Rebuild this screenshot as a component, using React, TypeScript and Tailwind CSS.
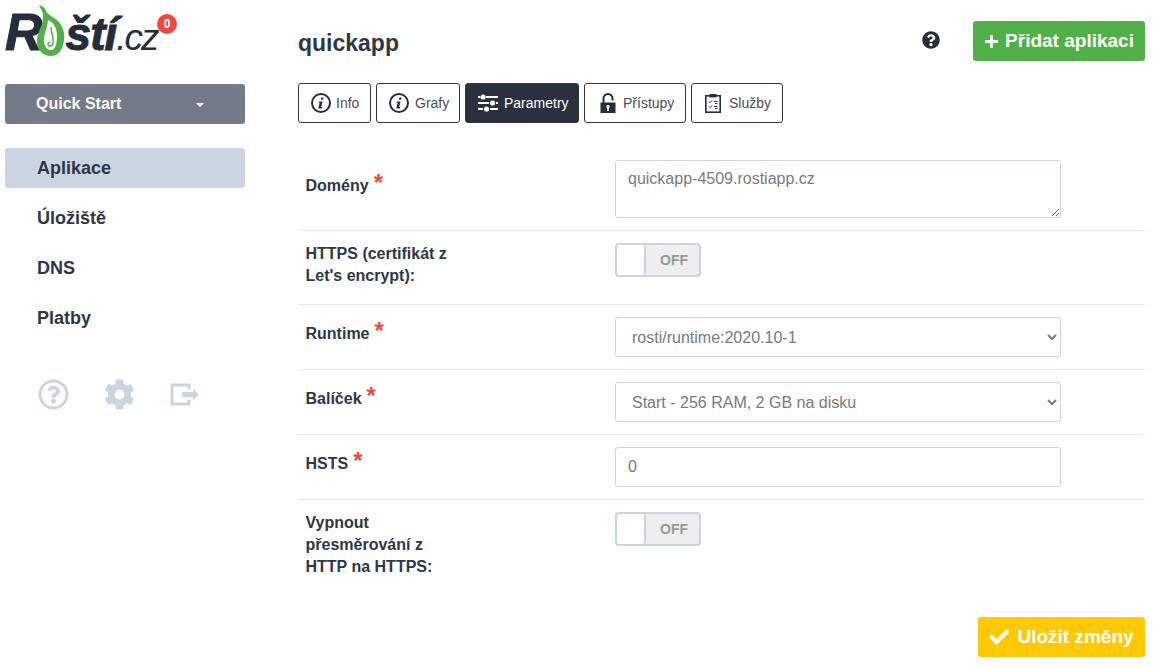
import { FaCheck, FaCog, FaPlus, FaQuestionCircle, FaRegQuestionCircle } from "react-icons/fa";

const font = "font-['Liberation_Sans',Arial,sans-serif]";

function InfoIcon() {
  return (
    <svg width="20" height="20" viewBox="0 0 20 20" fill="none">
      <circle cx="10" cy="10" r="9" stroke="currentColor" strokeWidth="2" />
      <path d="M10.4 4.6h2.2l-.5 2.2H9.9zM8 8.4h3.6l-1.5 5.6h1.2l-.4 1.4H7.2l1.5-5.6H7.6z" fill="currentColor" />
    </svg>
  );
}

function SlidersIcon() {
  return (
    <svg width="22" height="18" viewBox="0 0 22 18" fill="none">
      <path d="M1 3h2M9 3h12M1 9h11M19 9h2M1 15h5M13 15h8" stroke="currentColor" strokeWidth="2" />
      <circle cx="6" cy="3" r="2.6" fill="currentColor" />
      <circle cx="15.5" cy="9" r="2.6" fill="currentColor" />
      <circle cx="9.5" cy="15" r="2.6" fill="currentColor" />
    </svg>
  );
}

function LockIcon() {
  return (
    <svg width="16" height="20" viewBox="0 0 16 20" fill="none">
      <path d="M3.5 10V5.5a4.5 4.5 0 0 1 9 0V7.5" stroke="currentColor" strokeWidth="2" />
      <path fillRule="evenodd" clipRule="evenodd" d="M0.5 9.5h15V20H0.5zM8 12a1.6 1.6 0 0 0-.8 3V18h1.6v-3A1.6 1.6 0 0 0 8 12z" fill="currentColor" />
    </svg>
  );
}

function ClipboardIcon() {
  return (
    <svg width="18" height="20" viewBox="0 0 18 20" fill="none">
      <rect x="1.8" y="2.8" width="14.4" height="16.4" stroke="currentColor" strokeWidth="1.6" />
      <path d="M5.5 1h7v3.4h-7z" fill="currentColor" />
      <path d="M5 8.5l1.2 1.2L8 7.5M5 13.5l1.2 1.2L8 12.5M10 8.5h3.5M10 13.5h3.5M11 10.5h2.5M11 15.5h2.5" stroke="currentColor" strokeWidth="1" />
    </svg>
  );
}

function ExitIcon() {
  return (
    <svg width="30" height="24" viewBox="0 0 30 24" className="text-[#cbd5e0]">
      <path d="M19 6V2H2v19h17v-4" fill="none" stroke="currentColor" strokeWidth="3" />
      <path d="M12 9h11V5.5l6 6-6 6V14H12z" fill="currentColor" />
    </svg>
  );
}

function Tab({ label, icon, active, cls }: { label: string; icon: React.ReactNode; active?: boolean; cls: string }) {
  return (
    <div
      className={`flex h-10 items-center rounded-[3px] border text-sm ${cls} ${
        active ? "border-[#2d3748] bg-[#2a303e] text-white" : "border-[#2d3748] bg-white text-[#4a4f5a]"
      }`}
    >
      <span className={active ? "text-white" : "text-[#262d3b]"}>{icon}</span>
      {label}
    </div>
  );
}

function Star() {
  return <span className="ml-[5px] text-2xl leading-[22px] font-bold text-[#e74c3c]">*</span>;
}

function Toggle() {
  return (
    <div className="flex h-[34px] w-[86px] overflow-hidden rounded-[4px] border-2 border-[#cbd5e0] bg-[#eeeeee]">
      <div className="w-[29px] rounded-[3px] border-r-2 border-[#cbd5e0] bg-white" />
      <div className="flex flex-1 items-center justify-center pl-[3px] text-sm font-bold text-[#999999]">OFF</div>
    </div>
  );
}

function Row({ label, labelTop, children, bottom, last }: { label: React.ReactNode; labelTop: string; children: React.ReactNode; bottom: string; last?: boolean }) {
  return (
    <div className={`flex pt-3 ${bottom} ${last ? "" : "border-b border-[#e2e8f0]"}`}>
      <div className={`h-fit w-[317px] shrink-0 pl-[7.5px] text-base leading-[22px] font-bold text-[#2d3748] ${labelTop}`}>{label}</div>
      <div className="w-[446px]">{children}</div>
    </div>
  );
}

function SelectBox({ value }: { value: string }) {
  return (
    <select
      defaultValue={value}
      className="block h-10 w-full rounded-[3px] border border-[#cbd5e0] bg-white pl-3 text-base text-[#757a87]"
    >
      <option>{value}</option>
    </select>
  );
}

export default function App() {
  return (
    <div className={`${font} relative flex h-[667px] w-[1167px] overflow-hidden bg-white`}>
      <aside className="ml-[5px] w-[240px] shrink-0">
        <div className="relative h-[84px]">
          <div className="flex items-baseline pt-[4px] text-[#262d3b] italic leading-[56px]">
            <span className="text-[52px] font-bold [-webkit-text-stroke:1px_#262d3b]">R</span>
            <svg width="30" height="54" viewBox="34 4 30 54" className="mt-0 ml-[-7px] self-start">
              <path d="M37 5 C41 6 43 8 44 11 C46 15 52 17 57 22 C61 27 63 33 62 40 C61 50 56 56 49 56 C41 56 35 50 35 41 C35 35 38 29 40 24 C41 20 41 17 41 14 C40 10 38 8 37 5z" fill="#51b148" />
              <path d="M46 20 C51 22 55 27 55 36 C55 44 53 50 49 50 C45 50 42 46 42 40 C42 34 45 30 46 20z" fill="#ffffff" />
              <path d="M49 27 C49 33 52 38 51 43 C50 47 46 47 46 44 C46 42 48 42 48 43" fill="none" stroke="#51b148" strokeWidth="1.5" />
            </svg>
            <span className="text-[46px] font-bold tracking-[-1px] [-webkit-text-stroke:1px_#262d3b]">ští</span>
            <span className="text-[37px] font-normal tracking-[-2px]">.cz</span>
          </div>
          <div className="absolute left-[152px] top-[14px] flex h-5 w-5 items-center justify-center rounded-full bg-[#e74c3c] text-xs font-bold text-white">0</div>
        </div>
        <div className="flex h-10 items-center justify-between rounded-[3px] bg-[#757a87] pl-[31px] pr-[41px] text-base font-bold text-[#f7f7f7]">
          Quick Start
          <span className="mt-[2px] border-x-[4px] border-t-[4px] border-x-transparent border-t-white" />
        </div>
        <nav className="mt-6 flex flex-col gap-[10px] text-lg font-bold text-[#2d3748]">
          <div className="flex h-10 items-center rounded-[3px] bg-[#cbd5e0] pl-8">Aplikace</div>
          <div className="flex h-10 items-center pl-8">Úložiště</div>
          <div className="flex h-10 items-center pl-8">DNS</div>
          <div className="flex h-10 items-center pl-8">Platby</div>
        </nav>
        <div className="mt-[41px] flex items-center gap-[35px] pl-[33px] text-[#cbd5e0]">
          <FaRegQuestionCircle size={31} />
          <FaCog size={31} />
          <ExitIcon />
        </div>
      </aside>

      <main className="ml-[53px] w-[847px] shrink-0">
        <div className="flex h-[83px] items-start justify-between pt-[21px]">
          <h1 className="mt-[8px] text-[23px] leading-7 font-bold text-[#2d3748]">quickapp</h1>
          <div className="flex items-center gap-[33px]">
            <FaQuestionCircle size={18} className="mt-[-2px] text-[#262d3b]" />
            <div className="flex h-10 w-[172px] items-center justify-center gap-[6px] rounded-[3px] bg-[#51b148] text-[19px] font-bold text-white">
              <FaPlus size={15} />
              Přidat aplikaci
            </div>
          </div>
        </div>
        <div className="flex gap-[5px]">
          <Tab label="Info" icon={<InfoIcon />} cls="w-[73px] gap-[5px] pl-[12px]" />
          <Tab label="Grafy" icon={<InfoIcon />} cls="w-[84px] gap-[6px] pl-[12px]" />
          <Tab label="Parametry" icon={<SlidersIcon />} cls="w-[114px] gap-[5px] pl-[11px]" active />
          <Tab label="Přístupy" icon={<LockIcon />} cls="w-[102px] gap-[7px] pl-[15px]" />
          <Tab label="Služby" icon={<ClipboardIcon />} cls="w-[92px] gap-[7px] pl-[12px]" />
        </div>
        <div className="mt-[25px]">
          <Row label={<>Domény<Star /></>} labelTop="pt-[12px]" bottom="pb-3">
            <textarea
              readOnly
              defaultValue="quickapp-4509.rostiapp.cz"
              className="block h-[58px] w-full rounded-[3px] border border-[#cbd5e0] px-3 py-[7px] text-base leading-[22px] text-[#757a87]"
            />
          </Row>
          <Row label={<>HTTPS (certifikát z<br />Let's encrypt):</>} labelTop="" bottom="pb-[17px]">
            <Toggle />
          </Row>
          <Row label={<>Runtime<Star /></>} labelTop="pt-[3px]" bottom="pb-3">
            <SelectBox value="rosti/runtime:2020.10-1" />
          </Row>
          <Row label={<>Balíček<Star /></>} labelTop="pt-[3px]" bottom="pb-3">
            <SelectBox value="Start - 256 RAM, 2 GB na disku" />
          </Row>
          <Row label={<>HSTS<Star /></>} labelTop="pt-[3px]" bottom="pb-3">
            <input
              readOnly
              defaultValue="0"
              className="block h-10 w-full rounded-[3px] border border-[#cbd5e0] px-3 text-base text-[#757a87]"
            />
          </Row>
          <Row label={<>Vypnout<br />přesměrování z<br />HTTP na HTTPS:</>} labelTop="" bottom="pb-0" last>
            <Toggle />
          </Row>
        </div>
        <div className="mt-[39px] flex justify-end">
          <div className="flex h-10 w-[167px] items-center justify-center gap-[8px] rounded-[3px] bg-[#ffc905] text-[19px] font-bold text-white">
            <FaCheck size={20} />
            Uložit změny
          </div>
        </div>
      </main>
    </div>
  );
}
